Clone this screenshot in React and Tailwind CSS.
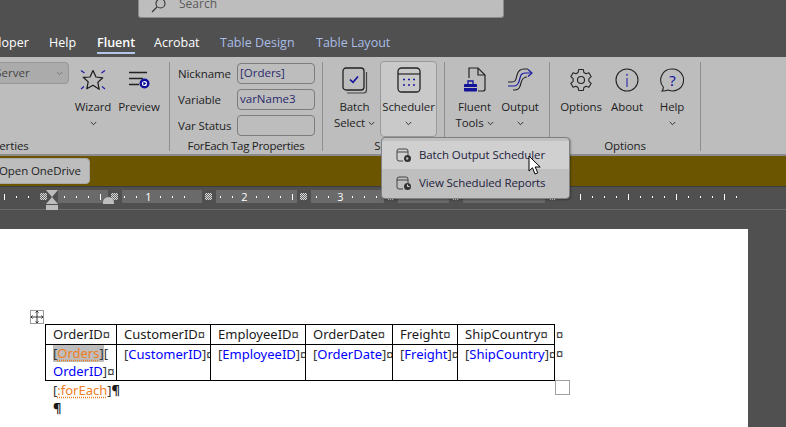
import React from 'react';

const Chevron = ({ className = '', color = '#333' }) => (
  <svg className={className} width="7" height="5" viewBox="0 0 7 5" fill="none" stroke={color} strokeWidth="1">
    <path d="M.8 1l2.700 2.700L6.200 1" />
  </svg>
);

const StarIcon = () => (
  <svg width="26" height="24" viewBox="0 0 26 24" fill="none">
    <path d="M13 2.500l3 6.500 6.800.8-5 4.600 1.400 6.900L13 17.300l-6.200 3.500 1.400-6.900-5-4.600L10 9z" stroke="#1a1a1a" strokeWidth="1.200" strokeLinejoin="round" />
    <path d="M1 2.500l3.500 2.500M25 2.500L21.500 5M1 21l3-2.500M25 21l-3-2.500" stroke="#1c1ca8" strokeWidth="1.200" />
  </svg>
);

const PreviewIcon = () => (
  <svg width="21" height="18" viewBox="0 0 21 18" fill="none">
    <path d="M0 1.500h18M0 7.500h14M0 13.500h10" stroke="#222" strokeWidth="1.300" />
    <circle cx="15.500" cy="12.500" r="3.800" stroke="#0f0f9c" strokeWidth="2.400" fill="#fff" />
    <path d="M14.300 10.500l3.200 2-3.200 2z" fill="#0f0f9c" />
  </svg>
);

const BatchIcon = () => (
  <svg width="26" height="27" viewBox="0 0 26 27" fill="none">
    <rect x="1" y="1" width="21" height="22" rx="3" stroke="#222" strokeWidth="1.300" />
    <path d="M24.500 5v18a3 3 0 0 1-3 3H5" stroke="#444" strokeWidth="1.200" />
    <path d="M8 12.500l3 2.800 5-5.800" stroke="#14149c" strokeWidth="1.700" />
  </svg>
);

const CalendarIcon = () => (
  <svg width="24" height="26" viewBox="0 0 24 26" fill="none">
    <rect x="1" y="1" width="22" height="24" rx="3.500" stroke="#222" strokeWidth="1.300" />
    <path d="M1 7h22" stroke="#222" strokeWidth="1.200" />
    <path d="M6 12.500h2M11 12.500h2M16 12.500h2M6 18h2M11 18h2M16 18h2" stroke="#1a1a9c" strokeWidth="1.600" />
  </svg>
);

const ToolsIcon = () => (
  <svg width="24" height="26" viewBox="0 0 24 26" fill="none">
    <path d="M6 11V1h9l7 7v14a2 2 0 0 1-2 2h-5" stroke="#222" strokeWidth="1.200" />
    <path d="M15 1v7h7" stroke="#222" strokeWidth="1.200" />
    <path d="M5 17v-3h5v3" stroke="#13139a" strokeWidth="1.300" />
    <rect x="1" y="17" width="13" height="7.500" rx="1" fill="#13139a" />
    <path d="M1 20.500h13" stroke="#bdbdbd" strokeWidth="1" />
  </svg>
);

const OutputIcon = () => (
  <svg width="26" height="24" viewBox="0 0 26 24" fill="none">
    <path d="M1 14h4c4 0 4-3 5-7s3-6 7-6h4" stroke="#222" strokeWidth="1.100" />
    <path d="M1 18h6c4 0 5-4 6-8s2-5 6-5h5" stroke="#1818a0" strokeWidth="1.100" />
    <path d="M6 22h2c4 0 5-3 6-7s2-5 5-6h1" stroke="#222" strokeWidth="1.100" />
    <path d="M21 1.500L25 5l-4 3.500" stroke="#1818a0" strokeWidth="1.200" />
  </svg>
);

const GearIcon = () => (
  <svg width="24" height="26" viewBox="0 0 24 24" fill="none" stroke="#222" strokeWidth="1.100" strokeLinejoin="round">
    <path d="M9.700 1.500h4.600l.6 3 2.100 1.200 2.900-1 2.300 4-2.300 2v2.600l2.300 2-2.300 4-2.900-1-2.100 1.200-.6 3H9.700l-.6-3L7 18.300l-2.900 1-2.300-4 2.300-2v-2.600l-2.300-2 2.300-4 2.900 1 2.100-1.200z" />
    <circle cx="12" cy="12" r="3.500" />
  </svg>
);

const InfoIcon = () => (
  <svg width="24" height="24" viewBox="0 0 24 24" fill="none">
    <circle cx="12" cy="12" r="11" stroke="#222" strokeWidth="1.100" />
    <path d="M12 10v9" stroke="#5454b4" strokeWidth="1.600" />
    <circle cx="12" cy="6.800" r="1.100" fill="#5454b4" />
  </svg>
);

const HelpIcon = () => (
  <svg width="24" height="24" viewBox="0 0 24 24" fill="none">
    <path d="M12.500 1a11 11 0 1 1-4.500 21c-2 .8-4 1.200-6 1 1-1.200 1.500-2.500 1.300-4A11 11 0 0 1 12.500 1z" stroke="#222" strokeWidth="1.100" />
    <text x="12.500" y="17.500" textAnchor="middle" fontSize="15" fontFamily="'Noto Sans', sans-serif" fill="#1414a0">?</text>
  </svg>
);

const SmallCal = ({ clock }) => (
  <svg width="16" height="15" viewBox="0 0 16 15" fill="none">
    <path d="M7 13H3a2 2 0 0 1-2-2V3a2 2 0 0 1 2-2h7a2 2 0 0 1 2 2v4" stroke="#444" strokeWidth="1" />
    <path d="M1 4h11" stroke="#444" strokeWidth="1" />
    <circle cx="11.500" cy="10.500" r="3.500" fill="#333" />
    {clock ? (
      <path d="M11.500 8.500v2h2" stroke="#ddd" strokeWidth="1" />
    ) : (
      <path d="M10.500 8.800l2.200 1.700-2.200 1.700z" fill="#ddd" />
    )}
  </svg>
);

const RibbonButton = ({ icon, label, second, chevron, className = '' }) => (
  <div className={`flex flex-col items-center ${className}`}>
    <div className="h-[36px] flex items-center justify-center">{icon}</div>
    <div className="text-[11.500px] tracking-[-0.1px] leading-[16px] mt-[1px] whitespace-nowrap">{label}</div>
    {second ? (
      <div className="text-[11.500px] tracking-[-0.1px] leading-[16px] flex items-center gap-[3px] whitespace-nowrap">
        {second} <Chevron />
      </div>
    ) : chevron ? (
      <div className="h-[16px] flex items-center"><Chevron /></div>
    ) : null}
  </div>
);

const Group = ({ width, label, children, labelClass = 'tracking-[-0.1px]' }) => (
  <div className={`${width} h-[89px] flex flex-col shrink-0 border-r border-[#8e8e8e]`}>
    <div className="flex-1 flex min-h-0">{children}</div>
    <div className={`text-[11.500px] leading-[14px] -mb-[2px] text-center whitespace-nowrap ${labelClass}`}>{label}</div>
  </div>
);

const FieldRow = ({ label, value }) => (
  <div className="flex items-center justify-between h-[21px] mb-[5px]">
    <span className="text-[11.500px] tracking-[-0.1px]">{label}</span>
    <div className="w-[78px] h-[21px] rounded-[4px] border border-[#7c7c7c] px-[2px] text-[11.500px] leading-[18px] text-[#2a2a6a]">{value}</div>
  </div>
);

// one tick every 12px, same spacing as the word ruler
const Ticks = ({ items, className = '' }) => (
  <div className={`flex items-center gap-[11px] h-[13px] shrink-0 ${className}`}>
    {items.map((it, i) => (
      <div key={i} className="w-px flex justify-center">
        {it === '.' ? (
          <span className="w-px h-[2px] bg-white" />
        ) : it === '|' ? (
          <span className="w-px h-[6px] bg-white" />
        ) : (
          <span className="text-[11px] leading-none text-white">{it}</span>
        )}
      </div>
    ))}
  </div>
);

const GridMark = () => (
  <div className="w-[7px] h-[7px] shrink-0 bg-[repeating-conic-gradient(#d8d8d8_0_25%,#666_0_50%)] bg-[length:2px_2px]" />
);

const RulerGap = ({ className = 'pl-[3px]' }) => (
  <div className={`w-[14px] h-[13px] shrink-0 flex items-center ${className}`}><GridMark /></div>
);

const Cell = ({ children }) => (
  <td className="border border-black align-top pl-[7px] p-0 whitespace-nowrap overflow-hidden">{children}</td>
);

const Mark = () => <span className="text-[#333] font-['Liberation_Sans',sans-serif]">¤</span>;

const Field = ({ name }) => (
  <>
    <span className="text-[#333]">[</span>
    <span className="text-[#0000ff]">{name}</span>
    <span className="text-[#333]">]</span>
    <Mark />
  </>
);

export default function App() {
  return (
    <div className="relative w-[786px] h-[427px] overflow-hidden bg-[#505050] text-[#1e1e1e] font-['Open_Sans','Noto_Sans',sans-serif]">
      {/* title bar */}
      <div className="h-[27px]">
        <div className="ml-[138px] w-[366px] h-[18px] overflow-hidden bg-[#bdbdbd] rounded-b-[3px] border-b border-x border-[#8a8a8a] flex items-end pl-[12px] pb-[6px] gap-[12px] text-[12px] text-[#5a5a5a]">
          <svg width="16" height="14" viewBox="0 0 16 14" fill="none" stroke="#333" strokeWidth="1.100" className="mb-[-3px]">
            <circle cx="9.500" cy="3.500" r="4.500" />
            <path d="M6 7l-5 5" />
          </svg>
          <span className="leading-[14px]">Search</span>
        </div>
      </div>

      {/* tabs */}
      <div className="h-[30px] flex items-start text-[12.500px] leading-[30px] text-white -ml-[31px] pt-px">
        <span className="w-[80px]">Developer</span>
        <span className="w-[48px]">Help</span>
        <span className="w-[57px] font-semibold relative h-[29px]">
          Fluent
          <span className="absolute left-0 bottom-[3px] w-[38px] h-[2px] bg-[#b4c7e7]" />
        </span>
        <span className="w-[66px]">Acrobat</span>
        <span className="w-[96px] text-[#a9bde6]">Table Design</span>
        <span className="text-[#a9bde6]">Table Layout</span>
      </div>

      {/* ribbon */}
      <div className="h-[99px] bg-[#bdbdbd] border-b-2 border-[#8c8c8c] flex pt-[5px]">
        <Group width="w-[170px]" label="Properties" labelClass="tracking-[-0.1px] text-left -ml-[26px]">
          <div className="-ml-[40px] w-[109px] h-[22px] bg-[#ababab] border border-[#979797] rounded-[4px] text-[11.500px] leading-[20px] pl-[10px] flex justify-between items-center pr-[5px] shrink-0 text-[#444]">
            <span>SQL Server</span>
            <Chevron color="#777" />
          </div>
          <RibbonButton className="w-[48px]" icon={<StarIcon />} label="Wizard" chevron />
          <RibbonButton className="w-[46px] -ml-[1px]" icon={<PreviewIcon />} label="Preview" />
        </Group>
        <Group width="w-[153px]" label="ForEach Tag Properties" labelClass="tracking-[-0.3px]">
          <div className="w-full pl-[8px] pr-[7px] pt-[1px]">
            <FieldRow label="Nickname" value="[Orders]" />
            <FieldRow label="Variable" value="varName3" />
            <FieldRow label="Var Status" value="" />
          </div>
        </Group>
        <Group width="w-[122px]" label="Scheduler" labelClass="tracking-[-0.1px] pl-[34px]">
          <RibbonButton className="w-[57px] ml-[3px]" icon={<BatchIcon />} label="Batch" second="Select" />
          <div className="w-[57px] h-[76px] -mt-[1px] -ml-[3px] bg-[#c9c9c9] border border-[#9a9a9a] rounded-[4px]">
            <RibbonButton icon={<CalendarIcon />} label="Scheduler" chevron />
          </div>
        </Group>
        <Group width="w-[105px]" label="">
          <RibbonButton className="w-[59px]" icon={<ToolsIcon />} label="Fluent" second="Tools" />
          <RibbonButton className="w-[44px] -ml-[6px]" icon={<OutputIcon />} label="Output" chevron />
        </Group>
        <Group width="w-[151px]" label="Options">
          <div className="flex pl-[7px]">
            <RibbonButton className="w-[48px]" icon={<GearIcon />} label="Options" />
            <RibbonButton className="w-[44px]" icon={<InfoIcon />} label="About" />
            <RibbonButton className="w-[46px]" icon={<HelpIcon />} label="Help" chevron />
          </div>
        </Group>
      </div>

      {/* onedrive bar */}
      <div className="h-[31px] bg-[#6b5500] flex items-center border-b border-[#3c3c3c]">
        <div className="-ml-[4px] w-[94px] h-[26px] rounded-[4px] bg-[#bdbdbd] border border-[#a8a8a8] text-[11.500px] tracking-[-0.1px] leading-[24px] pl-[2px] whitespace-nowrap">
          Open OneDrive
        </div>
      </div>

      {/* ruler */}
      <div className="relative h-[23px] border-b border-[#6c6c6c] flex items-start pt-[3px]">
        <Ticks className="w-[40px] pl-[4px]" items={['|', '.', '.']} />
        <div className="-mr-[1px] h-[13px] flex items-center"><GridMark /></div>
        <div className="w-[12px] h-[20px] shrink-0 flex flex-col items-center">
          <div className="w-0 h-0 border-x-[6px] border-x-transparent border-t-[7px] border-t-[#bdbdbd]" />
          <div className="w-0 h-0 border-x-[6px] border-x-transparent border-b-[7px] border-b-[#bdbdbd]" />
          <div className="w-[12px] h-[5px] mt-px bg-[#bdbdbd]" />
        </div>
        <Ticks className="w-[50px] bg-[#6a6a6a] pl-[6px]" items={['.', '.', '.', '|']} />
        <RulerGap />
        <Ticks className="w-[80px] bg-[#6a6a6a] pl-[2px]" items={['.', '.', '1', '.', '.', '.']} />
        <RulerGap />
        <Ticks className="w-[81px] bg-[#6a6a6a] pl-[4px]" items={['.', '.', '2', '.', '.', '.', '|']} />
        <RulerGap />
        <Ticks className="w-[73px] bg-[#6a6a6a] pl-[5px]" items={['.', '.', '3', '.', '.', '.']} />
        <RulerGap />
        <Ticks className="w-[51px] bg-[#6a6a6a]" items={[]} />
        <RulerGap />
        <Ticks className="w-[82px] bg-[#6a6a6a]" items={[]} />
        <RulerGap className="pl-[4px]" />
        <Ticks className="pl-[9px]" items={['.', '|', '.', '.', '.', '|', '.', '.', '.', '|', '.', '.', '.', '|', '.']} />
        <div className="absolute left-[103px] top-[10px] w-[11px] h-[7px] bg-[#bdbdbd] rounded-t-full" />
      </div>

      {/* document area */}
      <div className="h-[19px]" />
      <div className="relative w-[748px] h-[198px] bg-white pt-[95px] pl-[45px] text-[13px] leading-[18px] text-[#1a1a1a] font-['Noto_Sans',sans-serif]">
        <table className="border-collapse table-fixed w-[509px]">
          <colgroup>
            <col className="w-[71px]" />
            <col className="w-[94px]" />
            <col className="w-[95px]" />
            <col className="w-[87px]" />
            <col className="w-[65px]" />
            <col className="w-[97px]" />
          </colgroup>
          <tbody>
            <tr>
              <Cell>OrderID<Mark /></Cell>
              <Cell>CustomerID<Mark /></Cell>
              <Cell>EmployeeID<Mark /></Cell>
              <Cell>OrderDate<Mark /></Cell>
              <Cell>Freight<Mark /></Cell>
              <Cell>ShipCountry<Mark /></Cell>
            </tr>
            <tr>
              <Cell>
                <div className="leading-[17.500px]">
                  <span className="bg-[#bdbdbd]">
                    <span className="text-[#333]">[</span>
                    <span className="text-[#f07d1e] underline decoration-dotted underline-offset-2">Orders</span>
                    <span className="text-[#333]">]</span>
                  </span>
                  <span className="text-[#333]">[</span>
                </div>
                <div className="leading-[17.500px]"><span className="text-[#0000ff]">OrderID</span><span className="text-[#333]">]</span><Mark /></div>
              </Cell>
              <Cell><Field name="CustomerID" /></Cell>
              <Cell><Field name="EmployeeID" /></Cell>
              <Cell><Field name="OrderDate" /></Cell>
              <Cell><Field name="Freight" /></Cell>
              <Cell><Field name="ShipCountry" /></Cell>
            </tr>
          </tbody>
        </table>
        <div className="pl-[8px]">
          <span className="text-[#333]">[</span>
          <span className="text-[#f07d1e] underline decoration-dotted underline-offset-2">:forEach</span>
          <span className="text-[#333]">]</span>
          <span className="font-bold">¶</span>
        </div>
        <div className="pl-[8px] font-bold">¶</div>

        {/* table handles */}
        <div className="absolute left-[30px] top-[81px] w-[14px] h-[14px] border border-[#9a9a9a] flex items-center justify-center">
          <svg width="12" height="12" viewBox="0 0 12 12" fill="none" stroke="#333" strokeWidth="1">
            <path d="M6 0v12M0 6h12M4.500 1.500L6 0l1.500 1.500M4.500 10.500L6 12l1.500-1.500M1.500 4.500L0 6l1.500 1.500M10.500 4.500L12 6l-1.500 1.500" />
          </svg>
        </div>
        <div className="absolute left-[555px] top-[151px] w-[15px] h-[15px] border border-[#a0a0a0]" />
        <div className="absolute left-[556px] top-[96px]"><Mark /></div>
        <div className="absolute left-[556px] top-[115px]"><Mark /></div>
      </div>

      {/* scheduler dropdown */}
      <div className="absolute left-[381px] top-[137px] w-[189px] h-[62px] bg-[#bfbfbf] border border-[#808080] rounded-[4px] py-[3px] text-[11.500px] tracking-[-0.1px] text-[#222240] shadow-[1px_1px_2px_rgba(0,0,0,0.3)]">
        <div className="h-[28px] bg-[#d0d0d0] flex items-center pl-[14px] gap-[7px]">
          <SmallCal />
          <span>Batch Output Scheduler</span>
        </div>
        <div className="h-[28px] flex items-center pl-[14px] gap-[7px]">
          <SmallCal clock />
          <span>View Scheduled Reports</span>
        </div>
      </div>

      {/* cursor */}
      <svg className="absolute left-[528px] top-[155px]" width="14" height="21" viewBox="0 0 14 21">
        <path d="M1 1v15l3.500-3.200L7 19l2.800-1.200-2.600-5.800h5z" fill="#fff" stroke="#000" strokeWidth="1" strokeLinejoin="round" />
      </svg>
    </div>
  );
}
